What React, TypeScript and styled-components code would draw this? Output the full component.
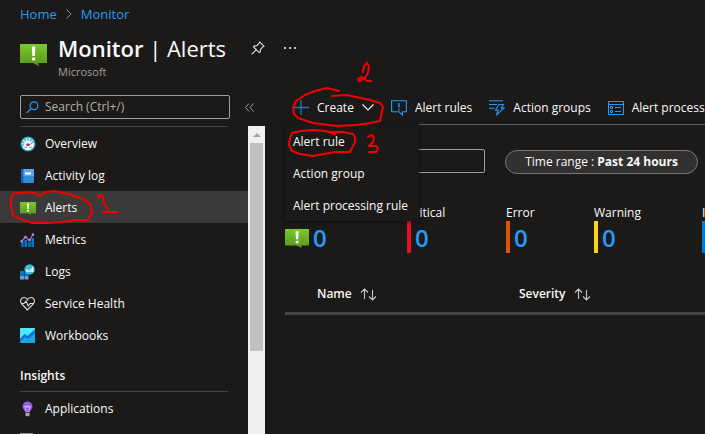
import React from "react";
import styled, { createGlobalStyle, css } from "styled-components";

const Global = createGlobalStyle`
  * { box-sizing: border-box; }
  body {
    margin: 0;
    background: #1b1a19;
    color: #faf9f8;
    font: 13px/16px "Open Sans", "Noto Sans", sans-serif;
    overflow: hidden;
  }
  button, input { font: inherit; color: inherit; }
  svg { display: block; flex: none; }
`;

const Page = styled.div`
  position: relative;
  display: flex;
  flex-direction: column;
  height: 100vh;
  overflow: hidden;
`;

const Breadcrumb = styled.nav`
  display: flex;
  align-items: center;
  gap: 9px;
  height: 28px;
  padding-left: 20px;
`;

const Crumb = styled.a`
  color: #2899f5;
  text-decoration: none;
`;

const Header = styled.header`
  display: flex;
  align-items: flex-start;
  height: 64px;
  padding: 4px 20px 0;
`;

const HeaderIcon = styled.div`
  width: 38px;
  padding-top: 12px;
`;

const Title = styled.h1`
  margin: 0;
  font-size: 22px;
  line-height: 32px;
  font-weight: 400;
  white-space: nowrap;
  b { font-weight: 600; }
`;

const Subtitle = styled.div`
  color: #a19f9d;
  font-size: 11px;
  line-height: 16px;
`;

const HeaderActions = styled.div`
  display: flex;
  gap: 16px;
  padding: 8px 0 0 24px;
`;

const IconButton = styled.button`
  display: flex;
  align-items: center;
  justify-content: center;
  width: 16px;
  height: 16px;
  padding: 0;
  border: 0;
  background: none;
`;

const Body = styled.div`
  display: flex;
  flex: 1;
  min-height: 0;
`;

const Sidebar = styled.aside`
  display: flex;
  flex-direction: column;
  flex: none;
  width: 265px;
`;

const SearchRow = styled.div`
  display: flex;
  align-items: center;
  gap: 11px;
  height: 34px;
  flex: none;
  padding: 3px 0 7px 20px;
`;

const SearchBox = styled.label`
  display: flex;
  align-items: center;
  gap: 6px;
  width: 210px;
  height: 24px;
  padding: 0 5px;
  border: 1px solid #a19f9d;
  border-radius: 2px;
`;

const SearchInput = styled.input`
  flex: 1;
  min-width: 0;
  padding: 0;
  border: 0;
  outline: 0;
  background: none;
  font-size: 12px;
  &::placeholder { color: #b3b0ad; opacity: 1; }
`;

const MenuArea = styled.div`
  display: flex;
  flex: 1;
  min-height: 0;
`;

const MenuList = styled.nav`
  flex: 1;
  min-width: 0;
  overflow: hidden;
`;

const Rule = styled.hr`
  height: 1px;
  margin: 0 20px 0 20px;
  border: 0;
  background: #484644;
`;

const MenuItem = styled.a<{ $active?: boolean }>`
  display: flex;
  align-items: center;
  gap: 9px;
  height: 32px;
  padding: 2px 0 0 20px;
  color: inherit;
  font-size: 12px;
  text-decoration: none;
  ${(p) => p.$active && css`background: #3b3a39;`}
`;

const SectionTitle = styled.h2`
  margin: 0;
  height: 40px;
  padding: 17px 0 0 20px;
  font-size: 12px;
  line-height: 16px;
  font-weight: 600;
`;

const ScrollTrack = styled.div`
  width: 17px;
  flex: none;
  padding: 0 2px;
  background: #f0f0f0;
`;

const ScrollArrow = styled.div`
  display: flex;
  align-items: center;
  justify-content: center;
  height: 17px;
`;

const ScrollThumb = styled.div`
  height: 208px;
  background: #c1c1c1;
`;

const Content = styled.main`
  flex: 1;
  min-width: 0;
  padding-left: 20px;
  overflow: hidden;
`;

const Toolbar = styled.div`
  position: relative;
  display: flex;
  gap: 17px;
  height: 33px;
  padding-left: 8px;
  border-bottom: 1px solid #605e5c;
`;

const ToolButton = styled.button`
  display: flex;
  align-items: center;
  gap: 8px;
  height: 30px;
  padding: 1px 0 0;
  border: 0;
  background: none;
  font-size: 12px;
  white-space: nowrap;
`;

const Dropdown = styled.div`
  position: absolute;
  top: 32px;
  left: 0;
  width: 134px;
  padding-top: 1px;
  background: #1b1a19;
  box-shadow: 0 1px 4px rgba(0, 0, 0, 0.5);
  z-index: 2;
`;

const DropdownItem = styled.button`
  display: block;
  width: 100%;
  height: 32px;
  padding: 2px 8px 0;
  border: 0;
  background: none;
  font-size: 12px;
  text-align: left;
  white-space: nowrap;
`;

const Filters = styled.div`
  display: flex;
  gap: 20px;
  padding-top: 24px;
`;

const FilterInput = styled.input`
  width: 200px;
  height: 24px;
  border: 1px solid #a19f9d;
  border-radius: 2px;
  background: none;
`;

const Pill = styled.button`
  width: 193px;
  height: 24px;
  margin-top: 1px;
  padding: 0;
  border: 1px solid #797775;
  border-radius: 12px;
  background: #323130;
  font-size: 12px;
  line-height: 20px;
  white-space: nowrap;
  b { font-weight: 700; }
`;

const Stats = styled.div`
  display: grid;
  grid-template-columns: 122px 99px 88px 108px 108px;
  padding-top: 30px;
`;

const StatLabel = styled.div`
  height: 17px;
  font-size: 12px;
  line-height: 18px;
`;

const StatValue = styled.div<{ $color?: string }>`
  display: flex;
  align-items: center;
  gap: 4px;
  height: 32px;
  padding-top: 2px;
  ${(p) => p.$color && css`
    border-left: 4px solid ${p.$color};
    padding-left: 4px;
  `}
  color: #2899f5;
  font-size: 24px;
  font-weight: 600;
`;

const Table = styled.table`
  width: 100%;
  margin-top: 25px;
  border-collapse: collapse;
  border-bottom: 3px solid #484644;
  table-layout: fixed;
`;

const Th = styled.th<{ $w?: number; $indent?: number }>`
  width: ${(p) => (p.$w ? `${p.$w}px` : "auto")};
  height: 35px;
  padding: 0 0 1px ${(p) => p.$indent ?? 0}px;
  font-size: 12px;
  font-weight: 600;
  text-align: left;
`;

const SortButton = styled.button`
  display: flex;
  align-items: center;
  gap: 8px;
  padding: 0;
  border: 0;
  background: none;
  font-weight: 600;
`;

const Marks = styled.svg`
  position: absolute;
  top: 0;
  left: 0;
  z-index: 3;
  pointer-events: none;
`;

const AlertIcon = ({ w, h, id }: { w: number; h: number; id: string }) => (
  <svg width={w} height={h} viewBox="0 0 27 22" preserveAspectRatio="none">
    <defs>
      <linearGradient id={id} x1="0" y1="0" x2="0" y2="1">
        <stop offset="0" stopColor="#7cc92b" />
        <stop offset="1" stopColor="#579420" />
      </linearGradient>
    </defs>
    <path d="M.5 0h26q.5 0 .5.5v18q0 .5-.5.5H18.500v3L13 19H.5q-.5 0-.5-.5V.5Q0 0 .5 0z" fill={`url(#${id})`} />
    <path d="M11.800 2.500h3.600l-.6 9.500h-2.400z" fill="#fff" />
    <circle cx="13.600" cy="15" r="1.800" fill="#fff" />
  </svg>
);

const OverviewIcon = () => (
  <svg width="16" height="16" viewBox="0 0 16 16">
    <circle cx="8" cy="8" r="7" fill="#edf8fc" stroke="#298bb5" strokeWidth="1.200" />
    <path d="M3 10a5.200 5.200 0 0 1 10-3" fill="none" stroke="#50bfe0" strokeWidth="2.400" strokeDasharray="2 .8" />
    <path d="M4 11.500h3M9 11.500h3" stroke="#75cbe3" strokeWidth="1.500" />
    <path d="M7 9l6-2.500L8.500 10z" fill="#b33a44" />
    <circle cx="7.800" cy="8.700" r="1.500" fill="#a83943" />
  </svg>
);

const LogIcon = () => (
  <svg width="16" height="16" viewBox="0 0 16 16">
    <rect x="1" y="1" width="13" height="14" rx="1" fill="#338ddd" />
    <path d="M1 1h2.500v14H1z" fill="#1765b2" />
    <path d="M3.500 1H13q1 0 1 1v6H3.500z" fill="#56a9ec" />
    <rect x="5" y="4.500" width="6" height="2" fill="#fff" />
  </svg>
);

const MetricsIcon = () => (
  <svg width="16" height="16" viewBox="0 0 16 16">
    <path d="M1 10h3v5H1z" fill="#0065b3" />
    <path d="M4.500 8h2.500v7H4.500z" fill="#0078d4" />
    <path d="M8 10h3v5H8z" fill="#0065b3" />
    <path d="M11.500 6H14v9h-2.500z" fill="#0078d4" />
    <path d="M1.500 9.500L5.500 5l4 3.500L13 2.500" fill="none" stroke="#a06bd6" strokeWidth="1.300" />
    <g fill="#b68be5"><circle cx="1.700" cy="9.300" r="1.300" /><circle cx="5.500" cy="5" r="1.300" /><circle cx="9.500" cy="8" r="1.300" /><circle cx="13" cy="2.500" r="1.300" /></g>
  </svg>
);

const LogsIcon = () => (
  <svg width="16" height="16" viewBox="0 0 16 16">
    <path d="M0 7h4v4H0z" fill="#0078d4" />
    <path d="M0 11.500h4v4H0zM4.500 11.500h4v4h-4z" fill="#5ea0ef" />
    <path d="M4.500 8h4v3h-4z" fill="#0078d4" />
    <circle cx="9.600" cy="5.400" r="5.200" fill="#32bedd" />
    <path d="M7 5v3M9 6v2M11 4.500V8M12.700 3v5" stroke="#fff" strokeWidth="1.300" />
  </svg>
);

const HeartIcon = () => (
  <svg width="16" height="16" viewBox="0 0 16 16" fill="none" stroke="#e1dfdd" strokeWidth="1.100">
    <path d="M7.500 14L1.700 8C-.8 4.700 1.300 1.500 4 1.500c1.600 0 2.800.8 3.500 2.200C8.200 2.300 9.400 1.500 11 1.500c2.700 0 4.800 3.200 2.300 6.500z" />
    <path d="M1 7.500h3l2-2.500 2.200 5L10 7.500h4" />
  </svg>
);

const WorkbookIcon = () => (
  <svg width="16" height="16" viewBox="0 0 16 16">
    <rect y="0" width="15" height="15" rx=".5" fill="#50e6ff" />
    <path d="M0 11L4.500 6l3 2L15 1.500V15H0z" fill="#1da5e8" />
    <path d="M0 11L4.500 6l3 2L15 1.500v4L8 11 5 9l-5 5z" fill="#0078d4" />
  </svg>
);

const BulbIcon = () => (
  <svg width="16" height="16" viewBox="0 0 16 16">
    <path d="M7.500.5a5 5 0 0 0-5 5c0 3 2.500 3.300 2.700 6h4.600c.2-2.700 2.700-3 2.700-6a5 5 0 0 0-5-5z" fill="#925ee2" />
    <path d="M6.500 11L5 5.500M8.500 11L10 5.500M4.500 5.500h6M5 4.500l1.500 2 1-2 1 2 1.500-2" fill="none" stroke="#cfb4f3" strokeWidth=".9" />
    <path d="M5.500 12h4v2.300l-1 1h-2l-1-1z" fill="#a7a7a7" />
  </svg>
);

const MachineIcon = () => (
  <svg width="16" height="16" viewBox="0 0 16 16"><rect y="0" width="13" height="15" fill="#949494" /></svg>
);

const SearchIcon = () => (
  <svg width="13" height="13" viewBox="0 0 13 13" fill="none" stroke="#2899f5" strokeWidth="1.200">
    <circle cx="8" cy="4.700" r="3.900" /><path d="M5.200 7.500L.6 12.200" />
  </svg>
);

const PinIcon = () => (
  <svg width="14" height="14" viewBox="0 0 14 14" fill="none" stroke="#e1dfdd" strokeWidth="1.100" strokeLinejoin="round">
    <path d="M8.700.9l4.400 4.400-1.300.5-2.300 2.500-.2 2.500-1 .9L2.500 5.900l.9-1 2.500-.2L8.200 2.200zM5.300 8.700L.6 13.400" />
  </svg>
);

const AlertRulesIcon = () => (
  <svg width="16" height="16" viewBox="0 0 16 16" fill="none" stroke="#2899f5" strokeWidth="1.100">
    <path d="M.6.8h14.800v11h-3.900v3.200L8 11.800H.6z" /><path d="M8 3v4.500M8 8.800v1.400" strokeWidth="1.400" />
  </svg>
);

const ActionIcon = () => (
  <svg width="16" height="16" viewBox="0 0 16 16" fill="none" stroke="#2899f5" strokeWidth="1.100">
    <path d="M0 .8h14M0 4.500h8M0 8.200h5.500M10 4.500h4.500L12.200 8h3L7.300 15.200l2-4.900H6.500z" />
  </svg>
);

const ListIcon = () => (
  <svg width="16" height="16" viewBox="0 0 16 16" fill="none" stroke="#2899f5">
    <path d="M.5 1.500h15v13H.5zM.5 4.500h15M7 7.500h6M7 11.500h6" /><path d="M2.500 6.500h2v2h-2zM2.500 10.500h2v2h-2z" />
  </svg>
);

const SortIcon = () => (
  <svg width="17" height="13" viewBox="0 0 17 13" fill="none" stroke="#c8c6c4" strokeWidth="1.100">
    <path d="M4.500 11V1M1 4.500L4.500 1 8 4.500M12.500 2v10M9 8.500l3.500 3.500L16 8.500" />
  </svg>
);

const items = [
  { label: "Overview", icon: <OverviewIcon /> },
  { label: "Activity log", icon: <LogIcon /> },
  { label: "Alerts", icon: <AlertIcon w={16} h={13} id="alert-menu" />, active: true },
  { label: "Metrics", icon: <MetricsIcon /> },
  { label: "Logs", icon: <LogsIcon /> },
  { label: "Service Health", icon: <HeartIcon /> },
  { label: "Workbooks", icon: <WorkbookIcon /> },
];

const stats = [
  { label: "Critical", color: "#e81123" },
  { label: "Error", color: "#da5700" },
  { label: "Warning", color: "#fcd116" },
  { label: "Informational", color: "#0078d4" },
];

export default function App() {
  return (
    <Page>
      <Global />
      <Breadcrumb aria-label="Breadcrumb">
        <Crumb href="#home">Home</Crumb>
        <svg width="6" height="10" viewBox="0 0 6 10" fill="none" stroke="#8a8886"><path d="M.5.5L5 5 .5 9.500" /></svg>
        <Crumb href="#monitor">Monitor</Crumb>
      </Breadcrumb>
      <Header>
        <HeaderIcon><AlertIcon w={27} h={22} id="alert-head" /></HeaderIcon>
        <div>
          <Title><b>Monitor</b> | Alerts</Title>
          <Subtitle>Microsoft</Subtitle>
        </div>
        <HeaderActions>
          <IconButton aria-label="Pin"><PinIcon /></IconButton>
          <IconButton aria-label="More">
            <svg width="12" height="2" viewBox="0 0 12 2" fill="#c8c6c4"><path d="M0 0h2v2H0zM5 0h2v2H5zM10 0h2v2h-2z" /></svg>
          </IconButton>
        </HeaderActions>
      </Header>
      <Body>
        <Sidebar>
          <SearchRow>
            <SearchBox>
              <SearchIcon />
              <SearchInput aria-label="Search" placeholder="Search (Ctrl+/)" />
            </SearchBox>
            <IconButton aria-label="Collapse menu">
              <svg width="9" height="9" viewBox="0 0 9 9" fill="none" stroke="#a19f9d"><path d="M4 .5l-3.500 4 3.500 4M8.500.5L5 4.500l3.500 4" /></svg>
            </IconButton>
          </SearchRow>
          <MenuArea>
            <MenuList aria-label="Monitor">
              <Rule />
              {items.map((i) => (
                <MenuItem key={i.label} href="#" $active={i.active}>{i.icon}{i.label}</MenuItem>
              ))}
              <SectionTitle>Insights</SectionTitle>
              <Rule />
              <MenuItem href="#"><BulbIcon />Applications</MenuItem>
              <MenuItem href="#" aria-label="Virtual Machines"><MachineIcon /></MenuItem>
            </MenuList>
            <ScrollTrack>
              <ScrollArrow><svg width="8" height="4" viewBox="0 0 8 4" fill="#a3a3a3"><path d="M4 0l4 4H0z" /></svg></ScrollArrow>
              <ScrollThumb />
            </ScrollTrack>
          </MenuArea>
        </Sidebar>
        <Content>
          <Toolbar>
            <ToolButton>
              <svg width="16" height="16" viewBox="0 0 16 16" stroke="#2374b6" strokeWidth="1.300"><path d="M8 0v15M0 7.500h16" /></svg>
              Create
              <svg width="12" height="7" viewBox="0 0 12 7" fill="none" stroke="#f3f2f1" strokeWidth="1.200"><path d="M.5.5L6 6 11.500.5" /></svg>
            </ToolButton>
            <ToolButton><AlertRulesIcon />Alert rules</ToolButton>
            <ToolButton><ActionIcon />Action groups</ToolButton>
            <ToolButton><ListIcon />Alert processing rules</ToolButton>
            <Dropdown>
              <DropdownItem>Alert rule</DropdownItem>
              <DropdownItem>Action group</DropdownItem>
              <DropdownItem>Alert processing rule</DropdownItem>
            </Dropdown>
          </Toolbar>
          <Filters>
            <FilterInput aria-label="Filter alerts" />
            <Pill>Time range : <b>Past 24 hours</b></Pill>
          </Filters>
          <Stats>
            <div aria-label="Total alerts">
              <StatLabel />
              <StatValue><AlertIcon w={24} h={19} id="alert-total" />0</StatValue>
            </div>
            {stats.map((s) => (
              <div key={s.label}>
                <StatLabel>{s.label}</StatLabel>
                <StatValue $color={s.color}>0</StatValue>
              </div>
            ))}
          </Stats>
          <Table>
            <thead>
              <tr>
                <Th $w={234} $indent={32}><SortButton>Name <SortIcon /></SortButton></Th>
                <Th><SortButton>Severity <SortIcon /></SortButton></Th>
              </tr>
            </thead>
          </Table>
        </Content>
      </Body>
      <Marks width="705" height="434" viewBox="0 0 705 434" fill="none" stroke="#f20000" strokeWidth="2" strokeLinecap="round" strokeLinejoin="round" aria-hidden="true">
        <path d="M40 196L35 193 24 192 13 194 11 199 11 206 13 215 20 219 32 223 48 223 63 222 76 220 88 220 92 212 90 204 85 200 72 195 55 191 46 192 40 196" />
        <path d="M99 198L98 196 102 195 104 203 108 210M103 212H118" />
        <path d="M339 91L327 88 315 91 305 95 296 101 293 108 294 114 298 118 313 123 337 126 356 125 370 123 380 121 383 107 380 103 370 100 347 95 332 96" />
        <path d="M363 72L364 66 367 63 369 66 368 73 365 78 359 81 358 79 361 77 367 81 371 81" />
        <path d="M335 134L325 131 313 130 301 131 292 133 290 138 289 145 292 151 300 154 313 156 335 152 350 152 355 142 355 137 353 134 342 132 330 132" />
        <path d="M368 137L372 135 374 138 373 142 369 146 376 146 378 148 376 152 369 152" />
      </Marks>
    </Page>
  );
}
